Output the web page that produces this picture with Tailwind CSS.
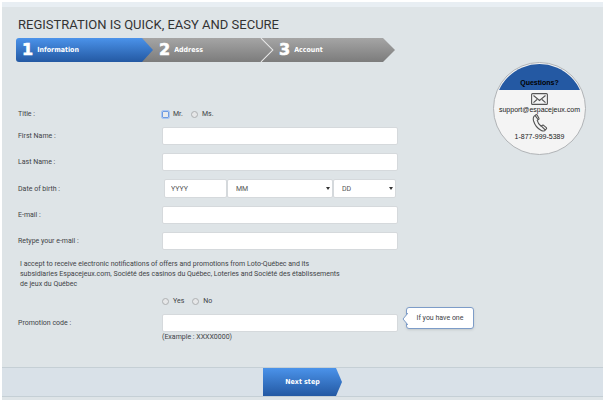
<!DOCTYPE html>
<html lang="en">
<head>
  <meta charset="UTF-8" />
  <meta name="viewport" content="width=device-width, initial-scale=1.0" />
  <title>Registration</title>
  <script src="https://cdn.jsdelivr.net/npm/@tailwindcss/browser@4"></script>
</head>
<body class="bg-white pt-[2px] px-[2px] font-[Roboto,sans-serif] text-[7px] leading-[10px] text-[#404346]">
  <div class="relative bg-[#dee4e7] border-t-[5px] border-[#e8eef3] pb-[3px]">

    <header class="px-4 pt-2">
      <h1 class="text-[13px] leading-[20px] text-[#333]">REGISTRATION IS QUICK, EASY AND SECURE</h1>

      <!-- Steps -->
      <ol class="flex mt-[3px] h-6 -ml-[2px] font-['DejaVu_Sans_Condensed','DejaVu_Sans',sans-serif] font-bold text-white">
        <li class="relative z-20 w-[137px] flex items-center gap-1 pl-[6px] rounded-l-[3px] bg-linear-to-b from-[#4b93ea] to-[#2459a3] [clip-path:polygon(0_0,126px_0,100%_50%,126px_100%,0_100%)]">
          <span class="font-['DejaVu_Sans',sans-serif] text-[16px] [-webkit-text-stroke:0.6px_white]">1</span>
          <span>Information</span>
        </li>
        <li class="relative z-10 w-[133px] -ml-3 flex items-center gap-1 pl-[18px] bg-linear-to-b from-[#a5a5a5] to-[#7c7c7c] [clip-path:polygon(0_0,121px_0,100%_50%,121px_100%,0_100%)]">
          <span class="font-['DejaVu_Sans',sans-serif] text-[16px] [-webkit-text-stroke:0.6px_white]">2</span>
          <span>Address</span>
          <svg class="absolute right-0 top-0 h-6 w-[14px]" viewBox="0 0 14 24" fill="none" stroke="#e2e2e2" stroke-width="1.2"><path d="M1 0L13 12L1 24" /></svg>
        </li>
        <li class="w-[133px] -ml-3 flex items-center gap-1 pl-[17px] bg-linear-to-b from-[#a5a5a5] to-[#7c7c7c] [clip-path:polygon(0_0,121px_0,100%_50%,121px_100%,0_100%)]">
          <span class="font-['DejaVu_Sans',sans-serif] text-[16px] [-webkit-text-stroke:0.6px_white]">3</span>
          <span>Account</span>
        </li>
      </ol>
    </header>

    <!-- Contact badge -->
    <aside class="absolute right-[17px] top-[55px] size-[93px] rounded-full border border-[#b0b3b6] bg-[#f4f4f4] p-px font-['Liberation_Sans',sans-serif] text-[#222] text-center">
      <div class="size-full rounded-full overflow-hidden">
        <h2 class="bg-[#2459a3] pt-[14px] h-[26px] leading-[10px] font-bold text-black">Questions?</h2>
        <svg class="mx-auto mt-[3px] w-[17px] h-3" viewBox="0 0 17 12" fill="none" stroke="#555" stroke-width="1.1"><rect x="0.6" y="0.6" width="15.8" height="10.8" rx="1" /><path d="M2.5 2.5L8.5 7.5L14.5 2.5M2.5 9.7L6 6.5M14.5 9.7L11 6.5" /></svg>
        <a href="mailto:support@espacejeux.com" class="block -mx-2 leading-[9px]">support@espacejeux.com</a>
        <svg class="mx-auto w-4 h-[18px]" viewBox="0 0 16 18" fill="none" stroke="#555" stroke-width="1.1" stroke-linejoin="round"><path d="M2.2 2.1L4 .8Q4.8.4 5.3 1.2L6.9 4.3Q7.2 5 6.5 5.5L5.2 6.4Q6 9.8 9.1 12.2L10.4 11.3Q11 10.9 11.6 11.3L14.3 13.6Q14.9 14.2 14.3 14.9L13 16.3Q11.5 17.6 9.3 16.5Q3.5 13.5 1.6 7Q.7 3.6 2.2 2.1ZM3.2 1.6L6.2 5.7M9.4 12.1L13.3 16" /></svg>
        <p>1-877-999-5389</p>
      </div>
    </aside>

    <form>
      <div class="grid grid-cols-[144px_minmax(0,236px)] gap-y-2 items-center px-4 pt-[47px]">
        <span id="title-label">Title :</span>
        <div role="radiogroup" aria-labelledby="title-label" class="flex gap-2">
          <label class="flex items-center gap-1"><input type="radio" name="title" class="appearance-none size-[7px] rounded-[1px] border border-[#6f9be0] bg-[#e8eaec] outline outline-[#a9c6f5]" />Mr.</label>
          <label class="flex items-center gap-1"><input type="radio" name="title" class="appearance-none size-[7px] rounded-full border border-[#adb0b2] bg-[#e6e7e8]" />Ms.</label>
        </div>

        <label for="first">First Name :</label>
        <input id="first" type="text" class="w-full h-[18px] px-2 bg-white border border-[#d5d9dc] rounded-[2px]" />

        <label for="last">Last Name :</label>
        <input id="last" type="text" class="w-full h-[18px] px-2 bg-white border border-[#d5d9dc] rounded-[2px]" />

        <label for="year">Date of birth :</label>
        <div class="flex px-[2px] h-[19px]">
          <input id="year" type="text" placeholder="YYYY" class="w-[63px] px-[6px] bg-white border border-[#d5d9dc] rounded-[2px] placeholder:text-[#555]" />
          <div class="relative flex-1">
            <select aria-label="Month" class="appearance-none w-full h-full px-2 bg-white border border-[#d5d9dc] rounded-[2px] text-[#555]"><option>MM</option></select>
            <svg class="absolute right-[3px] top-2 w-1 h-[3px]" viewBox="0 0 4 3"><path d="M0 0H4L2 3Z" fill="#333" /></svg>
          </div>
          <div class="relative w-[63px]">
            <select aria-label="Day" class="appearance-none w-full h-full px-2 bg-white border border-[#d5d9dc] rounded-[2px] text-[#555]"><option>DD</option></select>
            <svg class="absolute right-[3px] top-2 w-1 h-[3px]" viewBox="0 0 4 3"><path d="M0 0H4L2 3Z" fill="#333" /></svg>
          </div>
        </div>

        <label for="email">E-mail :</label>
        <input id="email" type="email" class="w-full h-[18px] px-2 bg-white border border-[#d5d9dc] rounded-[2px]" />

        <label for="email2">Retype your e-mail :</label>
        <input id="email2" type="email" class="w-full h-[18px] px-2 bg-white border border-[#d5d9dc] rounded-[2px]" />
      </div>

      <p id="accept" class="pl-[18px] mt-[9px]">
        I accept to receive electronic notifications of offers and promotions from Loto-Québec and its<br />
        subsidiaries Espacejeux.com, Société des casinos du Québec, Loteries and Société des établissements<br />
        de jeux du Québec
      </p>

      <div class="grid grid-cols-[144px_minmax(0,236px)] gap-y-2 items-center px-4 pt-[7px]">
        <div role="radiogroup" aria-labelledby="accept" class="col-start-2 flex gap-2">
          <label class="flex items-center gap-1"><input type="radio" name="accept" class="appearance-none size-[7px] rounded-full border border-[#adb0b2] bg-[#e6e7e8]" />Yes</label>
          <label class="flex items-center gap-1"><input type="radio" name="accept" class="appearance-none size-[7px] rounded-full border border-[#adb0b2] bg-[#e6e7e8]" />No</label>
        </div>

        <label for="promo">Promotion code :</label>
        <div class="relative">
          <input id="promo" type="text" aria-describedby="promo-example" class="block w-full h-[18px] px-2 bg-white border border-[#d5d9dc] rounded-[2px]" />
          <div role="tooltip" class="absolute left-full -top-[7px] ml-2 w-[68px] h-[22px] flex items-center justify-center bg-white border border-[#7d9cc8] rounded-[3px] shadow-sm whitespace-nowrap">
            <svg class="absolute -left-[5px] top-[5px] w-[6px] h-3" viewBox="0 0 6 12"><path d="M6 0L1 6L6 12" fill="#fff" stroke="#7d9cc8" /></svg>
            If you have one
          </div>
        </div>
      </div>
      <p id="promo-example" class="pl-40">(Example : XXXX0000)</p>

      <div class="mt-[25px] flex justify-center bg-[#d9e1e8] border-y border-[#c5cfd5]">
        <button type="submit" class="w-[79px] h-7 bg-linear-to-b from-[#4b93ea] to-[#2459a3] font-['DejaVu_Sans_Condensed','DejaVu_Sans',sans-serif] font-bold text-white [clip-path:polygon(0_0,73px_0,100%_50%,73px_100%,0_100%)]">Next step</button>
      </div>
    </form>
  </div>
</body>
</html>
